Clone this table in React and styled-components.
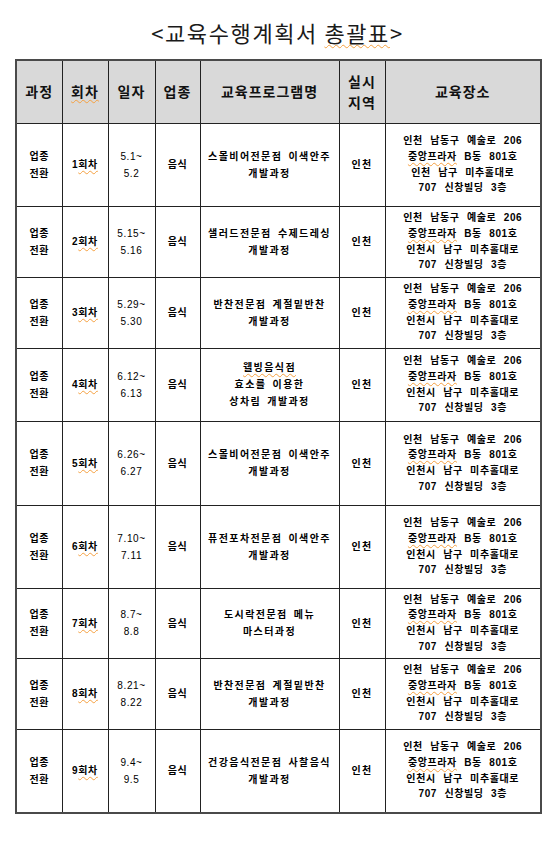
import React from 'react';
import styled, { createGlobalStyle } from 'styled-components';

const GlobalStyle = createGlobalStyle`
	html, body {
		margin: 0;
		padding: 0;
		background: #ffffff;
	}
	body {
		font-family: "Noto Sans CJK KR", "Noto Sans", sans-serif;
		color: #111;
	}
`;

// 교육 회차 데이터
const sessions = [
	{ n: 1, date: ['5.1~', '5.2'], prog: ['스몰비어전문점 이색안주', '개발과정'], city: '인천', h: 83 },
	{ n: 2, date: ['5.15~', '5.16'], prog: ['샐러드전문점 수제드레싱', '개발과정'], city: '인천시', h: 71 },
	{ n: 3, date: ['5.29~', '5.30'], prog: ['반찬전문점 계절밑반찬', '개발과정'], city: '인천시', h: 71 },
	{ n: 4, date: ['6.12~', '6.13'], prog: ['웰빙음식점', '효소를 이용한', '상차림 개발과정'], city: '인천시', h: 73, wavy: true },
	{ n: 5, date: ['6.26~', '6.27'], prog: ['스몰비어전문점 이색안주', '개발과정'], city: '인천시', h: 84 },
	{ n: 6, date: ['7.10~', '7.11'], prog: ['퓨전포차전문점 이색안주', '개발과정'], city: '인천시', h: 83 },
	{ n: 7, date: ['8.7~', '8.8'], prog: ['도시락전문점 메뉴', '마스터과정'], city: '인천시', h: 70 },
	{ n: 8, date: ['8.21~', '8.22'], prog: ['반찬전문점 계절밑반찬', '개발과정'], city: '인천시', h: 71 },
	{ n: 9, date: ['9.4~', '9.5'], prog: ['건강음식전문점 사찰음식', '개발과정'], city: '인천시', h: 84 }
];

const colWidths = [46, 46, 47, 45, 139, 46, 156];

const Page = styled.div`
	width: 556px;
	padding: 17px 0 30px 15px;
	box-sizing: border-box;
`;

const Title = styled.h1`
	margin: 0 0 12px 0;
	width: 525px;
	text-align: center;
	font-size: 22px;
	line-height: 30px;
	font-weight: 400;
	letter-spacing: 1.6px;
	color: #1a1a1a;
`;

const Wavy = styled.span`
	text-decoration: underline wavy #f5a040;
	text-decoration-thickness: 1px;
	text-underline-offset: 2px;
`;

const Table = styled.table`
	width: 525px;
	border-collapse: collapse;
	table-layout: fixed;
	border: 2px solid #4a4a4a;
`;

const HeadRow = styled.tr`
	height: 63px;
	background: #d9d9d9;
`;

const HeadCell = styled.th`
	border: 1px solid #222;
	padding: 0;
	font-size: 14px;
	font-weight: 700;
	letter-spacing: 1px;
	line-height: 21px;
	text-align: center;
	vertical-align: middle;
	color: #111;
`;

const Row = styled.tr`
	height: ${(p) => p.$h}px;
`;

const Cell = styled.td`
	border: 1px solid #222;
	padding: 0;
	text-align: center;
	vertical-align: middle;
	color: #000;
	font-size: 10px;
	line-height: ${(p) => (p.$kind === 'place' ? '15.7px' : '17px')};
	letter-spacing: ${(p) => (p.$kind === 'prog' ? '1.4px' : '0.6px')};
	word-spacing: ${(p) => (p.$kind === 'place' ? '4px' : '2px')};
	font-family: "Liberation Sans", "Noto Sans CJK KR", sans-serif;
	font-weight: ${(p) => (p.$kind === 'date' ? 400 : 700)};
`;

const Line = styled.div`
	white-space: nowrap;
`;

function renderRow(s) {
	return (
		<Row $h={s.h} key={s.n}>
			<Cell>
				<Line>업종</Line>
				<Line>전환</Line>
			</Cell>
			<Cell>
				{s.n}
				<Wavy>회차</Wavy>
			</Cell>
			<Cell $kind="date">
				{s.date.map((d) => (
					<Line key={d}>{d}</Line>
				))}
			</Cell>
			<Cell>음식</Cell>
			<Cell $kind="prog">
				{s.prog.map((p, i) => (
					<Line key={i}>{s.wavy && i === 0 ? <Wavy>{p}</Wavy> : p}</Line>
				))}
			</Cell>
			<Cell $kind="prog">인천</Cell>
			<Cell $kind="place">
				<Line>인천 남동구 예술로 206</Line>
				<Line>
					<Wavy>중앙프라자</Wavy> B동 801호
				</Line>
				<Line>{s.city} 남구 미추홀대로</Line>
				<Line>707 신창빌딩 3층</Line>
			</Cell>
		</Row>
	);
}

export default function App() {
	return (
		<Page>
			<GlobalStyle />
			<Title>
				&lt;교육수행계획서 <Wavy>총괄표</Wavy>&gt;
			</Title>
			<Table>
				<colgroup>
					{colWidths.map((w, i) => (
						<col key={i} style={{ width: w }} />
					))}
				</colgroup>
				<thead>
					<HeadRow>
						<HeadCell>과정</HeadCell>
						<HeadCell>
							<Wavy>회차</Wavy>
						</HeadCell>
						<HeadCell>일자</HeadCell>
						<HeadCell>업종</HeadCell>
						<HeadCell>교육프로그램명</HeadCell>
						<HeadCell>
							실시
							<br />
							지역
						</HeadCell>
						<HeadCell>교육장소</HeadCell>
					</HeadRow>
				</thead>
				<tbody>{sessions.map(renderRow)}</tbody>
			</Table>
		</Page>
	);
}
